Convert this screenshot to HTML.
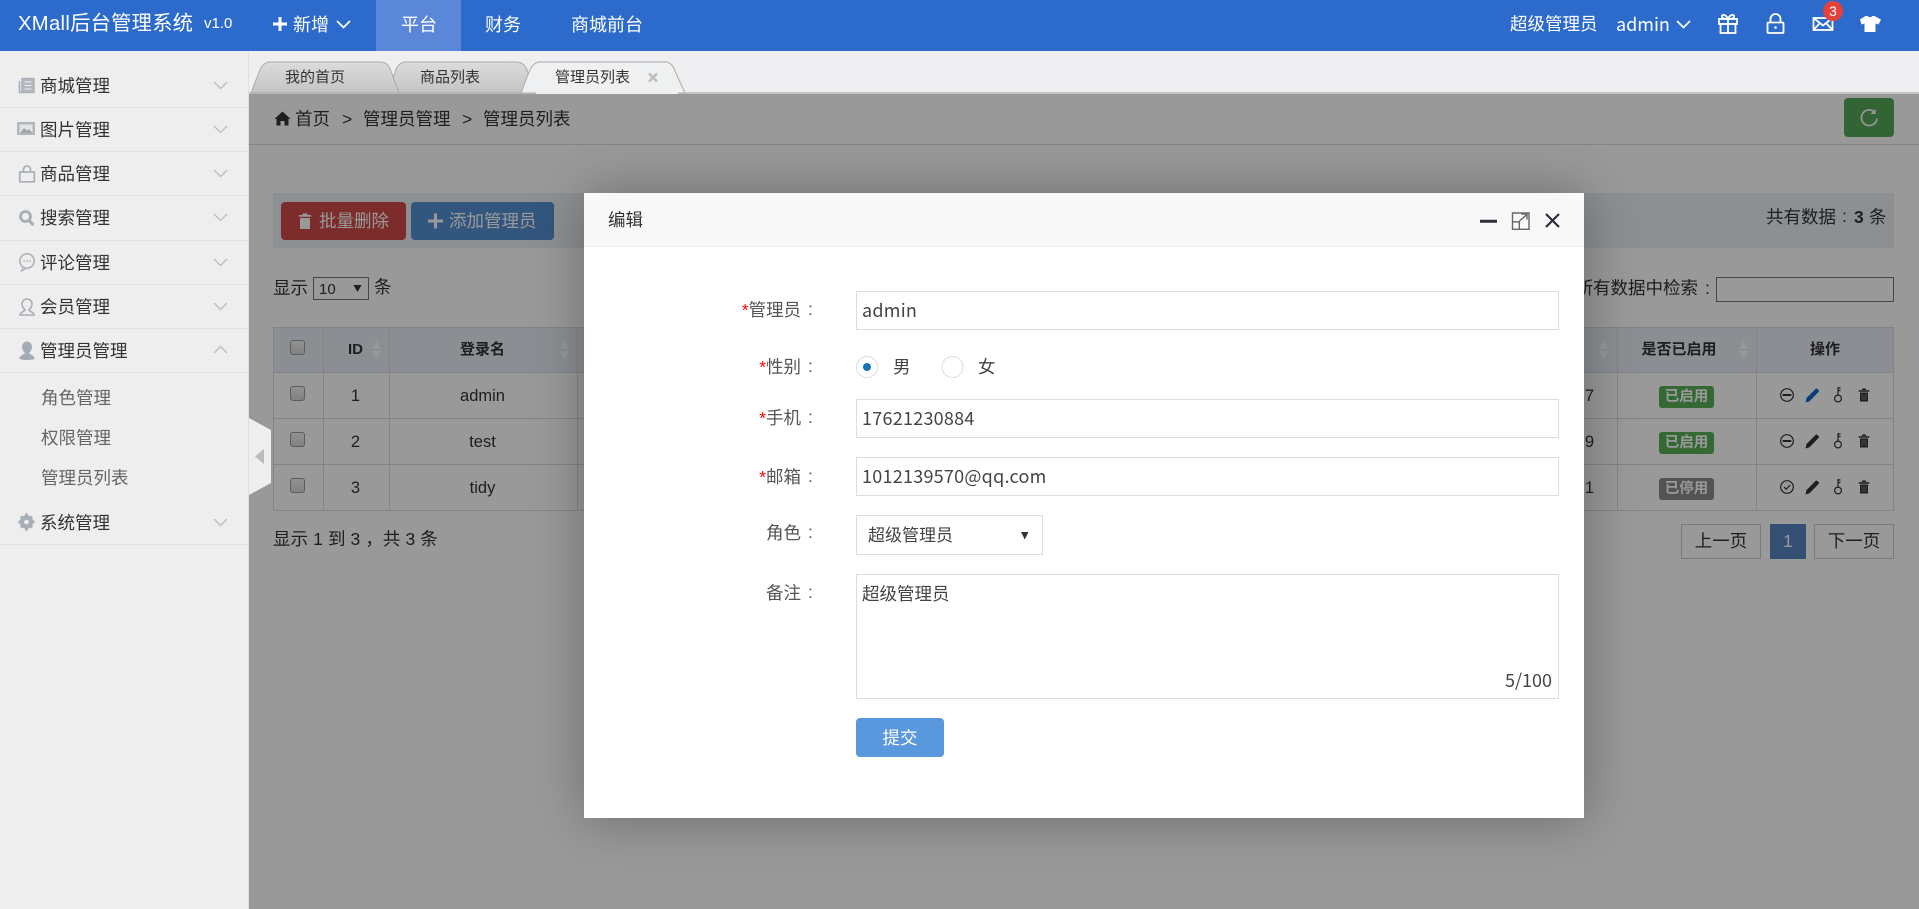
<!DOCTYPE html>
<html lang="zh-CN"><head><meta charset="utf-8"><title>管理员列表</title>
<style>
*{box-sizing:border-box;margin:0;padding:0}
html,body{width:1919px;height:909px;overflow:hidden;background:#eee}
body{font-family:"Liberation Sans","Noto Sans CJK SC",sans-serif;font-size:17px;color:#333;position:relative}
.t{position:absolute;white-space:nowrap}
.b{position:absolute}
svg{position:absolute;overflow:visible}
.w{color:#fff}
.n{font-family:"Noto Sans CJK SC","Liberation Sans",sans-serif}
.x{font-size:17.5px;line-height:24px;color:#333}
#hd{position:absolute;left:0;top:0;width:1919px;height:51px;background:#2c6bcb}
.side{color:#333;font-size:17.5px;line-height:24px;left:40px}
.sl{position:absolute;left:0;width:249px;height:1px;background:#e2e2e2}
.sub{color:#666;font-size:17.5px;line-height:24px;left:41px}
#c{position:absolute;left:0;top:0;width:1919px;height:909px;clip-path:inset(94px 0 0 249px);background:#fff}
.th{position:absolute;background:#e8eff5;border-right:1px solid #ddd;border-bottom:1px solid #ddd;border-top:1px solid #ddd;top:327px;height:46px;font-weight:bold;font-size:15px;line-height:44px;text-align:center;color:#333}
.td{position:absolute;border-right:1px solid #ddd;border-bottom:1px solid #ddd;height:46px;font-size:16.5px;line-height:46px;text-align:center;color:#333;background:#fff}
.cb{position:absolute;left:290px;width:15px;height:15px;border:1px solid #999;border-radius:3px;background:linear-gradient(#f4f4f4,#d8d8d8)}
.badge{position:absolute;left:1659px;width:55px;height:22px;border-radius:3px;color:#fff;font-size:14.5px;font-weight:bold;line-height:22px;text-align:center}
.pg{position:absolute;top:524px;height:35px;border:1px solid #ccc;font-size:17.5px;line-height:33px;text-align:center;color:#333}
#ov{position:absolute;left:0;top:0;width:1919px;height:909px;background:rgba(0,0,0,.4)}
#m{position:absolute;left:584px;top:193px;width:1000px;height:625px;background:#fff;box-shadow:1px 1px 50px rgba(0,0,0,.3)}
.lab{position:absolute;right:0;white-space:nowrap;font-size:17.5px;color:#555;line-height:26px}
.lab i{color:#f00;font-style:normal}
.col{position:absolute;left:224px;font-size:17.5px;color:#555;line-height:26px}
.in{position:absolute;left:856px;width:703px;height:39px;border:1px solid #ddd;font-size:18px;line-height:36px;padding-left:5px;color:#444;background:#fff;font-family:"Noto Sans CJK SC","Liberation Sans",sans-serif;letter-spacing:.25px}
</style></head><body>

<!-- sidebar -->
<div class="b" style="left:0;top:51px;width:249px;height:858px;background:#eee;border-right:1px solid #e0e0e0"></div>
<div class="sl" style="top:107px"></div><div class="sl" style="top:151px"></div><div class="sl" style="top:195px"></div><div class="sl" style="top:240px"></div><div class="sl" style="top:284px"></div><div class="sl" style="top:328px"></div><div class="sl" style="top:372px"></div><div class="sl" style="top:544px"></div>
<div class="t side" style="top:74px">商城管理</div>
<div class="t side" style="top:118px">图片管理</div>
<div class="t side" style="top:162px">商品管理</div>
<div class="t side" style="top:206px">搜索管理</div>
<div class="t side" style="top:251px">评论管理</div>
<div class="t side" style="top:295px">会员管理</div>
<div class="t side" style="top:339px">管理员管理</div>
<div class="t sub" style="top:386px">角色管理</div>
<div class="t sub" style="top:426px">权限管理</div>
<div class="t sub" style="top:466px">管理员列表</div>
<div class="t side" style="top:511px">系统管理</div>

<!-- sidebar icons -->
<svg style="left:0;top:0" width="249" height="560" fill="none" stroke="#a9afb7">
 <path d="M19.500 81v11.500h3" stroke-width="1.600"/><rect x="22" y="78.500" width="12" height="14" fill="#b4b9c0" stroke="#a9afb7" stroke-width="1.400"/><path d="M24.500 82h7M24.500 85.500h7M24.500 89h7" stroke="#eee" stroke-width="1.100"/>
 <rect x="17" y="122" width="18" height="13" fill="#b2b7be" stroke="none"/><rect x="19.500" y="124.500" width="13" height="8.500" fill="#e4e4e4" stroke="none"/><path d="M20 133l4-5 3 2.500 2-1.500 3.500 4z" fill="#a0a6ae" stroke="none"/>
 <path d="M19.800 172h14.500v9.800h-14.500zM23.500 172v-2.500a3.500 3.500 0 0 1 7 0v2.500" stroke-width="1.700"/>
 <circle cx="25.500" cy="216.500" r="5" stroke-width="2.800"/><path d="M29 220.500l4.500 4.500" stroke-width="3.200"/>
 <circle cx="27" cy="261" r="7.200" stroke-width="1.500"/><path d="M23 268l-1.500 3 4-2" stroke-width="1.200"/><path d="M23.500 261h1.400M26.400 261h1.400M29.300 261h1.400" stroke-width="1.600"/>
 <path d="M20 315c0-3 4-3 5-5-2-2-3-4-3-6a5 5 0 0 1 10 0c0 2-1 4-3 6 1 2 5 2 5 5z" stroke-width="1.600"/>
 <path d="M19.500 359c0-4 4-4 5.500-6-2-2-3-4-3-6.500a5 5 0 0 1 10 0c0 2.500-1 4.500-3 6.500 1.500 2 5.500 2 5.500 6 0 0-3 1-7.500 1s-7.500-1-7.500-1z" fill="#a5acb5" stroke="none"/>
 <circle cx="26.500" cy="522" r="4.500" stroke-width="4.400"/>
 <path d="M26.500 513.500v3M26.500 527.500v3M18.500 522h3M31.500 522h3M21 516.500l2 2M30 525.500l2 2M21 527.500l2-2M30 518.500l2-2" stroke-width="3"/>
</svg>
<!-- chevrons -->
<svg style="left:0;top:0" width="249" height="560" fill="none" stroke="#bbbfc4" stroke-width="1.400">
 <path d="M214 82l6.500 6.500 6.500-6.500M214 126l6.500 6.500 6.500-6.500M214 170l6.500 6.500 6.500-6.500M214 214l6.500 6.500 6.500-6.500M214 259l6.500 6.500 6.500-6.500M214 303l6.500 6.500 6.500-6.500M214 353l6.500-6.500 6.500 6.500M214 519l6.500 6.500 6.500-6.500"/>
</svg>

<!-- tabs -->
<div class="b" style="left:249px;top:51px;width:1670px;height:43px;background:#efeff1"></div>
<div class="b" style="left:249px;top:92px;width:1670px;height:2px;background:#c4c4c4"></div>
<svg style="left:0;top:0" width="700" height="100">
 <defs><linearGradient id="g" x1="0" y1="0" x2="0" y2="1"><stop offset="0" stop-color="#dcdcdc"/><stop offset="1" stop-color="#c4c4c4"/></linearGradient></defs>
 <path d="M388 93L395 72Q398 62 406 62H516Q524 62 527 70L535 93Z" fill="url(#g)" stroke="#aaa"/>
 <path d="M251 93L259 72Q263 62 270 62H380Q388 62 391 71L399 93Z" fill="url(#g)" stroke="#aaa"/>
 <path d="M521 93L529 72Q533 62 540 62H665Q672 62 675 71L685 93Z" fill="#eff0f1" stroke="#aaa"/>
 <rect x="536" y="92" width="142" height="3" fill="#eff0f1"/>
</svg>
<div class="t" style="left:285px;top:68px;font-size:15px;line-height:20px;color:#333">我的首页</div>
<div class="t" style="left:420px;top:68px;font-size:15px;line-height:20px;color:#333">商品列表</div>
<div class="t" style="left:555px;top:68px;font-size:15px;line-height:20px;color:#333">管理员列表</div>
<svg style="left:0;top:0" width="700" height="100" stroke-width="2.400"><path d="M499 73.500l8 8M507 73.500l-8 8" stroke="#cfcfcf"/><path d="M649 73.500l8 8M657 73.500l-8 8" stroke="#bcbcbc"/></svg>

<!-- main content -->
<div id="c">
 <svg style="left:0;top:0" width="300" height="140"><path d="M274.500 119l8-7.500 8 7.500h-2v6.500h-4v-4.500h-4v4.500h-4v-6.500z" fill="#333"/></svg>
 <div class="t x" style="left:295px;top:107px">首页</div>
 <div class="t x" style="left:342px;top:107px">&gt;</div>
 <div class="t x" style="left:363px;top:107px">管理员管理</div>
 <div class="t x" style="left:462px;top:107px">&gt;</div>
 <div class="t x" style="left:483px;top:107px">管理员列表</div>
 <div class="b" style="left:249px;top:144px;width:1670px;height:1px;background:#ddd"></div>
 <div class="b" style="left:1844px;top:98px;width:50px;height:39px;background:#55a858;border-radius:4px"></div>
 <svg style="left:0;top:0" width="1919" height="140" fill="none"><path d="M1875 112.500a7.800 7.800 0 1 0 2 6" stroke="#fff" stroke-width="1.600"/><path d="M1875.500 109v5h-5z" fill="#fff"/></svg>

 <div class="b" style="left:273px;top:193px;width:1621px;height:55px;background:#ebf0f4"></div>
 <div class="b" style="left:281px;top:202px;width:125px;height:38px;background:#cf4a46;border-radius:4px"></div>
 <div class="b" style="left:411px;top:202px;width:143px;height:38px;background:#5590d4;border-radius:4px"></div>
 <svg style="left:0;top:0" width="600" height="250"><path d="M299 215h12v1.800h-12zM300 218h10v11h-10zM302.500 213.500h5v1.500h-5z" fill="#fff"/><path d="M428 221h15M435.500 213.500v15" stroke="#fff" stroke-width="3"/></svg>
 <div class="t w" style="left:319px;top:209px;font-size:17.5px;line-height:24px">批量删除</div>
 <div class="t w" style="left:449px;top:209px;font-size:17.5px;line-height:24px">添加管理员</div>
 <div class="t x" style="left:1766px;top:205px">共有数据</div>
 <div class="t x" style="left:1842px;top:204px">:</div>
 <div class="t x" style="left:1854px;top:205px;font-weight:bold">3</div>
 <div class="t x" style="left:1869px;top:205px">条</div>

 <div class="t x" style="left:273px;top:276px">显示</div>
 <div class="b" style="left:313px;top:277px;width:56px;height:23px;border:1px solid #767676;background:#fff;font-size:15px;line-height:23px;padding-left:5px;color:#333">10</div>
 <svg style="left:0;top:0" width="400" height="300"><path d="M353.500 285h8l-4 7z" fill="#333"/></svg>
 <div class="t x" style="left:374px;top:275px">条</div>
 <div class="t x" style="left:1558px;top:276px">在所有数据中检索</div>
 <div class="t x" style="left:1705px;top:276px">:</div>
 <div class="b" style="left:1716px;top:277px;width:178px;height:25px;border:1px solid #767676;background:#fff"></div>

 <!-- table -->
 <div class="b" style="left:273px;top:327px;width:1px;height:184px;background:#ddd"></div>
 <div class="th" style="left:274px;width:50px"></div>
 <div class="th" style="left:324px;width:66px;padding-right:2px">ID</div>
 <div class="th" style="left:390px;width:188px;padding-right:2px">登录名</div>
 <div class="th" style="left:578px;width:1040px"></div>
 <div class="th" style="left:1618px;width:139px;padding-right:16px">是否已启用</div>
 <div class="th" style="left:1757px;width:137px">操作</div>
 <svg style="left:0;top:0" width="1919" height="400" fill="#fbfdff">
  <path d="M372 349l4.500-8 4.500 8zM372 351l4.500 8 4.500-8zM560 349l4.500-8 4.500 8zM560 351l4.500 8 4.500-8zM1599 349l4.500-8 4.500 8zM1599 351l4.500 8 4.500-8zM1739 349l4.500-8 4.500 8zM1739 351l4.500 8 4.500-8z"/>
 </svg>
 <div class="td" style="left:274px;top:373px;width:50px"></div><div class="td" style="left:324px;top:373px;width:66px;padding-right:2px">1</div><div class="td" style="left:390px;top:373px;width:188px;padding-right:2px">admin</div><div class="td" style="left:578px;top:373px;width:1040px;text-align:right;padding-right:23px">57</div><div class="td" style="left:1618px;top:373px;width:139px"></div><div class="td" style="left:1757px;top:373px;width:137px"></div>
 <div class="td" style="left:274px;top:419px;width:50px"></div><div class="td" style="left:324px;top:419px;width:66px;padding-right:2px">2</div><div class="td" style="left:390px;top:419px;width:188px;padding-right:2px">test</div><div class="td" style="left:578px;top:419px;width:1040px;text-align:right;padding-right:23px">89</div><div class="td" style="left:1618px;top:419px;width:139px"></div><div class="td" style="left:1757px;top:419px;width:137px"></div>
 <div class="td" style="left:274px;top:465px;width:50px"></div><div class="td" style="left:324px;top:465px;width:66px;padding-right:2px">3</div><div class="td" style="left:390px;top:465px;width:188px;padding-right:2px">tidy</div><div class="td" style="left:578px;top:465px;width:1040px;text-align:right;padding-right:23px">61</div><div class="td" style="left:1618px;top:465px;width:139px"></div><div class="td" style="left:1757px;top:465px;width:137px"></div>
 <div class="cb" style="top:340px"></div><div class="cb" style="top:386px"></div><div class="cb" style="top:432px"></div><div class="cb" style="top:478px"></div>
 <div class="badge" style="top:386px;background:#58b058">已启用</div>
 <div class="badge" style="top:432px;background:#58b058">已启用</div>
 <div class="badge" style="top:478px;background:#8a8a8a">已停用</div>
 <svg style="left:0;top:0" width="1919" height="520" fill="none" stroke="#333" stroke-width="1.200">
  <defs>
   <g id="pen"><path d="M-6.500 7.500l1-4.500L3.500 -6a1.400 1.400 0 0 1 2 0l1 1a1.400 1.400 0 0 1 0 2L-2.500 6.200z" stroke="none" fill="currentColor"/></g>
   <g id="key"><circle cx="0" cy="3.500" r="3.400"/><path d="M0 .1V-8M0-7h2.500M0-4.500h2.500"/></g>
   <g id="trash"><path d="M-5.300-4h10.600M-2-5.700h4" stroke-width="1.500"/><path d="M-4-2.500v9h8v-9z" fill="#333" stroke="none"/><path d="M-2-1v6M0-1v6M2-1v6" stroke="#999" stroke-width=".7"/></g>
   <g id="min"><circle r="6.300"/><path d="M-4.300 0h8.600" stroke-width="2"/></g>
  </defs>
  <use href="#min" x="1787" y="395"/><use href="#pen" x="1812" y="395" color="#1566c8"/><use href="#key" x="1838" y="395"/><use href="#trash" x="1864" y="395"/>
  <use href="#min" x="1787" y="441"/><use href="#pen" x="1812" y="441" color="#333"/><use href="#key" x="1838" y="441"/><use href="#trash" x="1864" y="441"/>
  <circle cx="1787" cy="487" r="6.300"/><path d="M1784 487l2.200 2.300 3.800-4.300"/><use href="#pen" x="1812" y="487" color="#333"/><use href="#key" x="1838" y="487"/><use href="#trash" x="1864" y="487"/>
 </svg>

 <div class="t x" style="left:273px;top:527px;letter-spacing:.1px">显示 1 到 3 ，共 3 条</div>
 <div class="pg" style="left:1681px;width:80px">上一页</div>
 <div class="pg" style="left:1770px;width:36px;background:#5585c0;border-color:#5585c0;color:#fff">1</div>
 <div class="pg" style="left:1814px;width:80px">下一页</div>

 <div id="ov"></div>

 <div id="m">
  <div class="b" style="left:0;top:0;width:1000px;height:54px;background:#f8f8f8;border-bottom:1px solid #eee"></div>
  <div class="t x" style="left:24px;top:15px">编辑</div>
  <svg style="left:0;top:0" width="1000" height="54" fill="none">
   <path d="M896 28.300h17" stroke="#2e2d3c" stroke-width="3"/>
   <path d="M928.500 28.500v-8.500h16.500v16.300h-9" stroke="#666" stroke-width="1.400"/><rect x="928.500" y="28.800" width="6.800" height="7.500" stroke="#666" stroke-width="1.400"/><path d="M935.500 28l7.500-6.500M937.500 21h5.500v5.500" stroke="#666" stroke-width="1.400"/>
   <path d="M962 21l13 13M975 21l-13 13" stroke="#2e2d3c" stroke-width="2.200"/>
  </svg>
 </div>
 <div class="b" style="left:584px;top:246px;width:217px;height:480px">
  <div class="lab" style="top:51px"><i>*</i>管理员</div><div class="col" style="top:50px">:</div>
  <div class="lab" style="top:108px"><i>*</i>性别</div><div class="col" style="top:107px">:</div>
  <div class="lab" style="top:159px"><i>*</i>手机</div><div class="col" style="top:158px">:</div>
  <div class="lab" style="top:218px"><i>*</i>邮箱</div><div class="col" style="top:217px">:</div>
  <div class="lab" style="top:274px">角色</div><div class="col" style="top:273px">:</div>
  <div class="lab" style="top:334px">备注</div><div class="col" style="top:333px">:</div>
 </div>
 <div class="in" style="top:291px">admin</div>
 <div class="in" style="top:399px">17621230884</div>
 <div class="in" style="top:457px">1012139570@qq.com</div>
 <svg style="left:0;top:0" width="1000" height="400" fill="none"><circle cx="867" cy="367" r="10.500" stroke="#ddd"/><circle cx="867" cy="367" r="4" fill="#1673b6"/><circle cx="952.500" cy="367" r="10.500" stroke="#ddd"/></svg>
 <div class="t" style="left:893px;top:355px;font-size:17.5px;line-height:24px;color:#444">男</div>
 <div class="t" style="left:978px;top:355px;font-size:17.5px;line-height:24px;color:#444">女</div>
 <div class="b" style="left:856px;top:515px;width:187px;height:40px;border:1px solid #ddd;background:#fff;font-size:17px;line-height:40px;padding-left:11px;color:#444">超级管理员</div>
 <svg style="left:0;top:0" width="1100" height="560"><path d="M1021 532h7.500l-3.750 7.500z" fill="#333"/></svg>
 <div class="b" style="left:856px;top:574px;width:703px;height:125px;border:1px solid #ddd"></div>
 <div class="t" style="left:862px;top:582px;font-size:17.5px;line-height:24px;color:#444">超级管理员</div>
 <div class="t n" style="left:1505px;top:668px;font-size:18px;line-height:24px;color:#444">5/100</div>
 <div class="b" style="left:856px;top:718px;width:88px;height:39px;background:#5a98de;border-radius:4px;color:#fff;font-size:17.5px;line-height:40px;text-align:center">提交</div>
</div>

<svg style="left:0;top:0" width="280" height="520"><path d="M249 418L271 430V483L249 495Z" fill="#eee"/><path d="M264 449V464L255 456.500Z" fill="#bbb"/></svg>

<!-- header -->
<div id="hd"></div>
<div class="b" style="left:376px;top:0;width:85px;height:51px;background:#5a87d8"></div>
<div class="t w" style="left:18px;top:11px;font-size:20.2px;line-height:26px;letter-spacing:.33px">XMall后台管理系统</div>
<div class="t w" style="left:204px;top:13px;font-size:15px;line-height:22px">v1.0</div>
<svg style="left:0;top:0" width="1919" height="51" fill="none" stroke="#fff">
 <path d="M273 24h14M280 17v14" stroke-width="3"/>
 <path d="M337 21l6.500 6.500 6.500-6.500" stroke-width="1.700"/>
 <path d="M1677 21l6.500 6.500 6.500-6.500" stroke-width="1.700"/>
 <g stroke-width="1.800">
  <rect x="1719" y="19" width="18" height="5"/><rect x="1720.500" y="24" width="15" height="9"/><path d="M1728 19v14M1728 19c-2-5-7-5-6-2 .5 1.500 3 2 6 2 3 0 5.500-.5 6-2 1-3-4-3-6 2"/>
  <rect x="1767.500" y="22.500" width="16" height="10.500" rx="1"/><path d="M1770.500 22v-3a5 5 0 0 1 10 0v3"/>
  <rect x="1813.500" y="18" width="19" height="12"/><path d="M1813.500 18l9.500 7.500 9.500-7.500M1813.500 30l6.500-7M1832.500 30l-6.500-7"/>
 </g>
 <circle cx="1775.500" cy="27.500" r="1.300" fill="#fff" stroke="none"/>
 <path d="M1860 19.500l5.500-3.500h2c1 1.500 4 1.500 5 0h2l6.500 3.500-2.500 5-3-1V32h-11v-8.500l-3 1z" fill="#fff" stroke="none"/>
</svg>
<div class="t w" style="left:293px;top:12px;font-size:18px;line-height:26px">新增</div>
<div class="t w" style="left:401px;top:12px;font-size:18px;line-height:26px">平台</div>
<div class="t w" style="left:485px;top:12px;font-size:18px;line-height:26px">财务</div>
<div class="t w" style="left:571px;top:12px;font-size:18px;line-height:26px">商城前台</div>
<div class="t w" style="left:1510px;top:12px;font-size:17.5px;line-height:24px">超级管理员</div>
<div class="t w n" style="left:1616px;top:12px;font-size:18px;line-height:24px">admin</div>
<div class="b" style="left:1823px;top:1px;width:20px;height:20px;border-radius:50%;background:#e5423d;color:#fff;font-size:14px;line-height:20px;text-align:center">3</div>
</body></html>
